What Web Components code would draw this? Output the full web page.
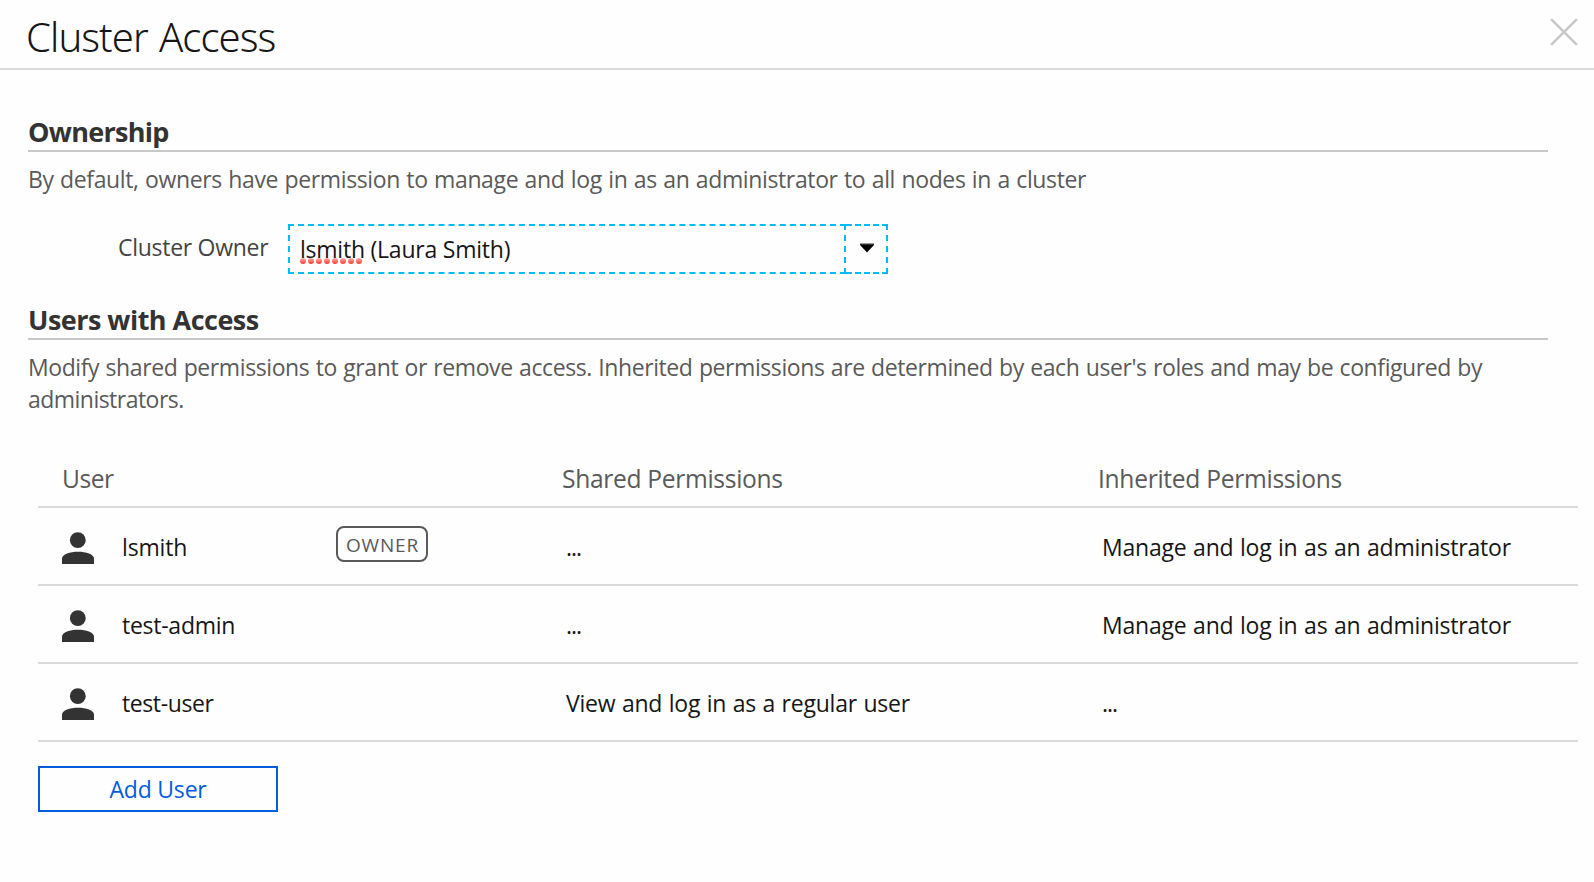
<!DOCTYPE html>
<html lang="en">
<head>
<meta charset="utf-8">
<title>Cluster Access</title>
<style>
  body { margin: 0; background: #fefefe; color: #161616; font: 400 23px/32px "Open Sans", "Noto Sans", sans-serif; letter-spacing: -0.25px; }
</style>
</head>
<body>
<access-dialog>
  <span slot="title">Cluster Access</span>
  <dialog-section heading="Ownership" style="--heading-top:46px;--heading-spacing:-0.71px;--copy-spacing:-0.37px">
    <span slot="copy">By default, owners have permission to manage and log in as an administrator to all nodes in a cluster</span>
    <owner-select label="Cluster Owner"><span slot="flagged">lsmith</span> (Laura Smith)</owner-select>
  </dialog-section>
  <dialog-section heading="Users with Access" style="--heading-top:30px;--heading-spacing:-0.52px;--copy-spacing:-0.41px">
    <span slot="copy">Modify shared permissions to grant or remove access. Inherited permissions are determined by each user's roles and may be configured by <span style="letter-spacing:-0.53px">administrators.</span></span>
    <users-table>
      <user-row style="letter-spacing:-0.16px">lsmith<owner-badge slot="badge">OWNER</owner-badge><span slot="shared" style="letter-spacing:-1px">...</span><span slot="inherited" style="letter-spacing:-0.21px">Manage and log in as an administrator</span></user-row>
      <user-row style="letter-spacing:-0.26px">test-admin<span slot="shared" style="letter-spacing:-1px">...</span><span slot="inherited" style="letter-spacing:-0.21px">Manage and log in as an administrator</span></user-row>
      <user-row style="letter-spacing:-0.4px">test-user<span slot="shared" style="letter-spacing:-0.23px">View and log in as a regular user</span><span slot="inherited" style="letter-spacing:-1px">...</span></user-row>
    </users-table>
    <action-button>Add User</action-button>
  </dialog-section>
</access-dialog>

<script>
const define = (name, html, setup) => {
  const template = document.createElement('template');
  template.innerHTML = html;
  customElements.define(name, class extends HTMLElement {
    constructor() {
      super();
      this.attachShadow({ mode: 'open' }).append(template.content.cloneNode(true));
    }
    connectedCallback() { if (setup) setup(this, this.shadowRoot); }
  });
};

define('close-icon', `
  <style>:host{display:block;width:28px;height:28px} svg{display:block}</style>
  <svg width="28" height="28" viewBox="0 0 28 28" fill="none" stroke="#c8c8c8" stroke-width="2.6" stroke-linecap="round"><path d="M1.8 1.8 26.2 26.2M26.2 1.8 1.8 26.2"/></svg>`);

define('access-dialog', `
  <style>
    :host{display:block;height:882px;overflow:hidden}
    header{display:flex;justify-content:space-between;box-sizing:border-box;height:70px;padding:5px 16px 0 26px;border-bottom:2px solid #d9d9d9}
    h1{margin:0;font:300 40px/63px "Noto Sans","Open Sans",sans-serif;letter-spacing:-0.93px;word-spacing:1.7px}
    close-icon{margin-top:13px}
    main{padding-left:28px}
  </style>
  <header><h1><slot name="title"></slot></h1><close-icon></close-icon></header>
  <main><slot></slot></main>`);

define('dialog-section', `
  <style>
    :host{display:flow-root}
    h2{box-sizing:border-box;width:1520px;height:36px;margin:var(--heading-top) 0 11px;border-bottom:2px solid #c8c8c8;color:#333;font-size:27px;line-height:32px;letter-spacing:var(--heading-spacing)}
    p{margin:0;width:1480px;color:#5a5a5a;letter-spacing:var(--copy-spacing);word-spacing:.8px}
  </style>
  <h2></h2><p><slot name="copy"></slot></p><slot></slot>`,
  (host, root) => { root.querySelector('h2').textContent = host.getAttribute('heading'); });

define('spell-mark', `
  <style>:host{display:block;white-space:normal} svg{display:block}</style>
  <svg width="62" height="6" viewBox="0 0 62 6"><defs><linearGradient id="g" x2="0" y2="1"><stop offset="0" stop-color="#ffb3ae"/><stop offset="1" stop-color="#ff382c"/></linearGradient></defs></svg>`,
  (host, root) => {
    const svg = root.querySelector('svg');
    for (let i = 0; i < 8; i++) {
      const dot = document.createElementNS('http://www.w3.org/2000/svg', 'circle');
      dot.setAttribute('cx', 3 + i * 8);
      dot.setAttribute('cy', 3);
      dot.setAttribute('r', 3);
      dot.setAttribute('fill', 'url(#g)');
      svg.append(dot);
    }
  });

define('owner-select', `
  <style>
    :host{display:flex;margin-top:29px;height:50px}
    label{width:170px;padding-left:90px;line-height:46px;color:#444;letter-spacing:-0.28px}
    .value,.arrow{box-sizing:border-box;height:50px;border:2px dashed #00bcf2}
    .value{width:558px;padding-left:10px;line-height:47px;white-space:pre;letter-spacing:-0.23px}
    .word{position:relative;display:inline-block}
    spell-mark{position:absolute;left:0;top:32px}
    .arrow{display:flex;width:42px;border-left:0;padding:17px 0 0 14px}
    svg{display:block}
  </style>
  <label></label>
  <div class="value"><span class="word"><slot name="flagged"></slot><spell-mark></spell-mark></span><slot></slot></div>
  <div class="arrow"><svg width="14" height="10" viewBox="0 0 14 10"><path fill="#999" d="M0 0h14v1H0z"/><path fill="#333" d="M0 1h14v1H0z"/><path d="M0 2h14L7 9.5z"/></svg></div>`,
  (host, root) => { root.querySelector('label').textContent = host.getAttribute('label'); });

define('users-table', `
  <style>
    :host{display:block;margin:46px 0 0 10px;width:1540px}
    .head{display:grid;grid-template-columns:500px 536px 1fr;box-sizing:border-box;height:47px;padding-left:24px;border-bottom:2px solid #d9d9d9;color:#5a5a5a;font-size:24.6px;line-height:36px}
  </style>
  <div class="head"><span style="letter-spacing:-.5px">User</span><span style="letter-spacing:-.32px">Shared Permissions</span><span style="letter-spacing:-.29px">Inherited Permissions</span></div>
  <slot></slot>`);

define('user-icon', `
  <style>:host{display:block;width:32px;height:32px} svg{display:block}</style>
  <svg width="32" height="32" viewBox="0 0 32 32" fill="#333"><circle cx="15.8" cy="8.2" r="7.9"/><path d="M0 32v-5.500c0-4 8-6.700 16-6.700s16 2.700 16 6.700V32z"/></svg>`);

define('user-row', `
  <style>
    :host{display:grid;grid-template-columns:500px 536px 1fr;box-sizing:border-box;height:78px;padding-left:24px;border-bottom:2px solid #d9d9d9;line-height:74px}
    .user{display:flex;height:76px}
    user-icon{margin-top:24px}
    .name{width:214px;margin-left:28px;padding-top:2px}
    .cell{padding:2px 0 0 4px;height:74px;word-spacing:.8px}
  </style>
  <div class="user"><user-icon></user-icon><div class="name"><slot></slot></div><slot name="badge"></slot></div>
  <div class="cell"><slot name="shared"></slot></div>
  <div class="cell"><slot name="inherited"></slot></div>`);

define('owner-badge', `
  <style>:host{display:block;box-sizing:border-box;width:92px;height:36px;margin-top:18px;border:2px solid #5a5a5a;border-radius:8px;color:#5a5a5a;font-size:19px;line-height:34px;letter-spacing:.8px;padding-left:8px;white-space:nowrap}</style>
  <slot></slot>`);

define('action-button', `
  <style>
    :host{display:block;margin:24px 0 0 10px}
    button{display:block;box-sizing:border-box;width:240px;height:46px;padding:0;border:2px solid #005cde;background:transparent;color:#005cde;font:inherit;line-height:42px;letter-spacing:-0.2px}
  </style>
  <button type="button"><slot></slot></button>`);
</script>
</body>
</html>
